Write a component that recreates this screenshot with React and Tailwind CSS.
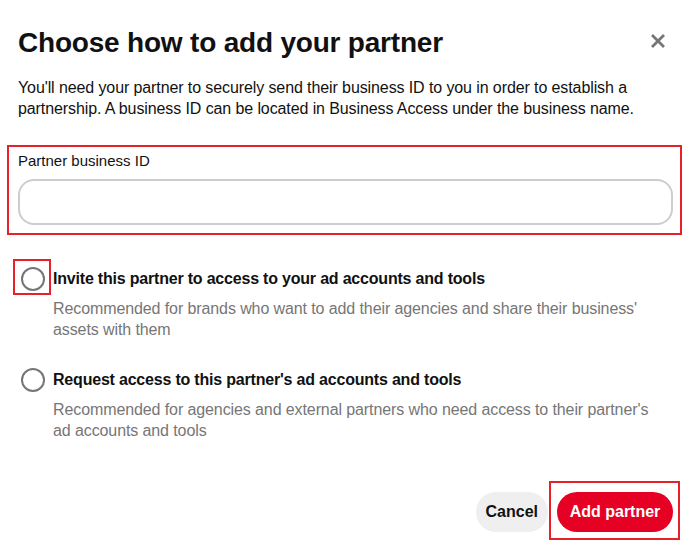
import React from "react";

function Radio({ annotated }) {
  return (
    <div className="relative w-[24px] h-[24px] shrink-0">
      <div className="w-[24px] h-[24px] rounded-full border-2 border-[#767676] bg-white" />
      {annotated && (
        <div className="absolute left-[-8px] top-[-8px] w-[38px] h-[36px] border-2 border-[#e8202a]" />
      )}
    </div>
  );
}

export default function App() {
  return (
    <div
      className="w-[694px] h-[545px] bg-white text-[#111111] overflow-hidden"
      style={{ fontFamily: '"Liberation Sans", Arial, sans-serif' }}
    >
      <div className="flex items-center justify-between pl-[18px] pr-[28px] pt-[25px] h-[61px]">
        <h1 className="text-[28px] leading-[36px] font-bold tracking-[-0.2px]">Choose how to add your partner</h1>
        <svg width="16" height="16" viewBox="0 0 16 16" className="mt-[-4px]">
          <path d="M2 2 L14 14 M14 2 L2 14" stroke="#767676" strokeWidth="2.8" strokeLinecap="butt" />
        </svg>
      </div>

      <p className="mt-[16px] pl-[18px] pr-[40px] text-[16px] leading-[21px] tracking-[-0.1px]">
        You'll need your partner to securely send their business ID to you in order to establish a partnership. A business ID can be located in Business Access under the business name.
      </p>

      <div className="mt-[26px] ml-[7px] w-[675px] border-2 border-[#e8202a] pl-[9px] pr-[7px] pt-[4px] pb-[8px]">
        <label className="block text-[15px] leading-[20px]">Partner business ID</label>
        <div className="mt-[8px] h-[46px] rounded-[16px] border-2 border-[#cdcdcd]" />
      </div>

      <div className="mt-[32px] pl-[21px]">
        <div className="flex items-center gap-[8px] h-[24px]">
          <Radio annotated />
          <span className="text-[16px] font-bold leading-[24px] tracking-[-0.2px]">Invite this partner to access to your ad accounts and tools</span>
        </div>
        <p className="mt-[7px] pl-[32px] pr-[20px] text-[16px] leading-[21px] tracking-[-0.1px] text-[#767676]">
          Recommended for brands who want to add their agencies and share their business'<br />assets with them
        </p>
      </div>

      <div className="mt-[28px] pl-[21px]">
        <div className="flex items-center gap-[8px] h-[24px]">
          <Radio />
          <span className="text-[16px] font-bold leading-[24px] tracking-[-0.2px]">Request access to this partner's ad accounts and tools</span>
        </div>
        <p className="mt-[7px] pl-[32px] pr-[20px] text-[16px] leading-[21px] tracking-[-0.1px] text-[#767676]">
          Recommended for agencies and external partners who need access to their partner's<br />ad accounts and tools
        </p>
      </div>

      <div className="mt-[40px] flex justify-end items-start pr-[14px]">
        <button className="mt-[11px] h-[40px] px-[10px] rounded-full bg-[#efefef] text-[16px] font-bold text-[#111111]">
          Cancel
        </button>
        <div className="ml-[1px] border-2 border-[#e8202a] pl-[6px] pr-[5px] pt-[9px] pb-[6px]">
          <button className="h-[40px] w-[116px] rounded-full bg-[#e60023] text-[16px] font-bold text-white">
            Add partner
          </button>
        </div>
      </div>
    </div>
  );
}
